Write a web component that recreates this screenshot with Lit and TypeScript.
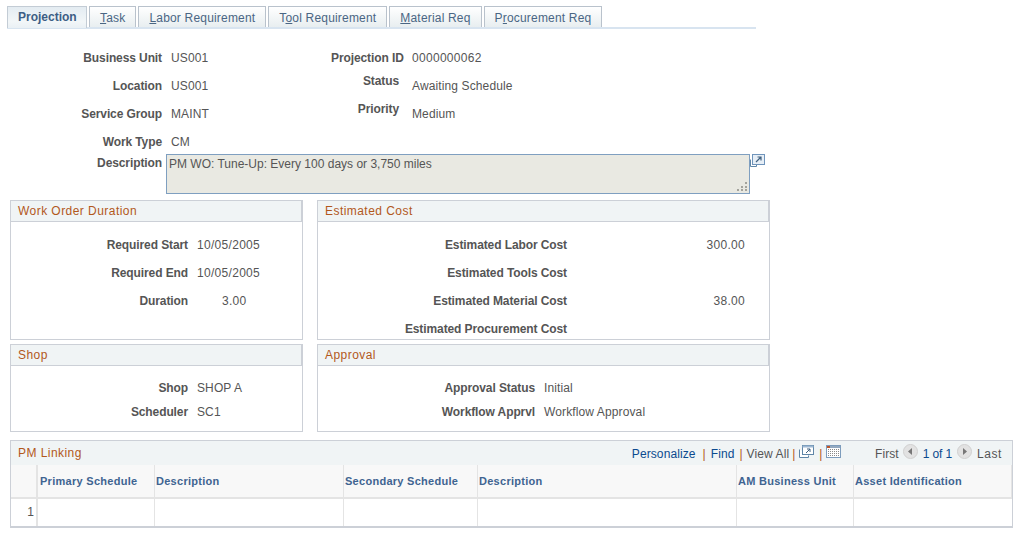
import { LitElement, html, css } from "lit";
import { customElement } from "lit/decorators.js";

const F = (l: string, v: string, cls = "") => html`<div class="lab ${cls}">${l}</div><div class="val ${cls}">${v}</div>`;

@customElement("app-root")
export class AppRoot extends LitElement {
  static styles = css`
    :host { display: block; width: 1021px; height: 536px; background: #fff; font-family: "Liberation Sans", Arial, sans-serif; font-size: 12px; color: #555; overflow: hidden; letter-spacing: .12px; }
    .tabs { display: flex; margin: 6px 0 0 7px; width: 749px; height: 21px; border-bottom: 2px solid #d8e4f0; }
    .tab { height: 21px; box-sizing: border-box; border: 1px solid #b9c2cc; border-bottom: 0; background: linear-gradient(#fff, #e8eef0); color: #4a6684; padding: 4px 10px 0 10px; margin-right: 2px; line-height: 15px; white-space: nowrap; letter-spacing: .185px; }
    .tab u { text-decoration: underline; }
    .tab.on { height: 22px; width: 80px; background: linear-gradient(#e4ecf2, #f2f6f8 70%, #e9f0f5); color: #3d5e85; font-weight: 700; padding: 3px 0 0 10px; letter-spacing: 0; margin-bottom: -1px; border-color: #c3ccd5; }
    .form { display: grid; grid-template-columns: 162px 169px 72px 1fr; grid-auto-rows: 28px; margin-top: 15px; align-items: center; }
    .lab { text-align: right; font-weight: 700; letter-spacing: -.1px; white-space: nowrap; }
    .val { padding-left: 9px; white-space: nowrap; }
    .val.d { letter-spacing: .3px; }
    .lab.up { padding: 0 4px 10px 0; }
    .spacer { grid-column: 3 / 5; }
    .descrow { display: flex; height: 46px; margin-top: -2px; }
    .descrow .lab { width: 162px; padding-top: 2px; line-height: 15px; }
    .ta { width: 584px; height: 40px; box-sizing: border-box; margin-left: 4px; border: 1px solid #7f9fc0; background: #e9e9e2; padding: 2px 2px; line-height: 15px; position: relative; letter-spacing: 0; }
    .grip { position: absolute; right: 1px; bottom: 1px; }
    .groups { display: grid; grid-template-columns: 293px 453px; grid-template-rows: 140px 88px; column-gap: 14px; row-gap: 4px; margin-left: 10px; }
    .grp { border: 1px solid #ccd0d7; box-sizing: border-box; }
    .hd { height: 21px; box-sizing: border-box; background: #f0f4f5; border-bottom: 1px solid #ccd0d7; border-right: 1px solid #ccd0d7; padding: 2px 0 0 7px; line-height: 16px; color: #b2581c; letter-spacing: .45px; }
    .body { display: grid; grid-auto-rows: 28px; align-items: center; padding-top: 9px; }
    .b1 { grid-template-columns: 177px 1fr; }
    .b2 { grid-template-columns: 249px 178px; }
    .b2 .val { text-align: right; padding: 0; }
    .b3 { grid-template-columns: 177px 1fr; grid-auto-rows: 24px; padding-top: 10px; }
    .b4 { grid-template-columns: 217px 1fr; grid-auto-rows: 24px; padding-top: 10px; }
    .val.num { padding-left: 34px; }
    .table { margin: 8px 0 0 10px; width: 1003px; height: 88px; border: 1px solid #ccd0d7; border-bottom-width: 2px; box-sizing: border-box; }
    .thd { height: 24px; background: #f0f4f5; display: flex; align-items: center; }
    .thd .t { margin-left: 7px; color: #b2581c; letter-spacing: .45px; flex: 1; }
    .nav { display: flex; align-items: center; white-space: nowrap; margin-right: 10px; height: 24px; padding-top: 2px; box-sizing: border-box; letter-spacing: .1px; }
    .nav a { color: #0b4a8f; }
    .nav a.pg { letter-spacing: -.15px; }
    .last { letter-spacing: .6px; }
    .s { color: #b2581c; letter-spacing: 0; }
    .s1 { margin: 0 5px 0 7px; }
    .s2 { margin: 0 4px 0 5px; }
    .s3 { margin: 0 4px 0 3px; }
    .s4 { margin: 0 4px 0 5px; }
    .nav svg { display: block; margin-bottom: 5px; }
    .first { margin-left: 33.5px; }
    .prev { margin: 0 5px 0 4px; }
    .next { margin: 0 5px; }
    .grid { display: grid; grid-template-columns: 27px 117px 189px 134px 259px 117px 1fr; grid-template-rows: 34px 27px; }
    .th { background: #f8f8f8; border-right: 1px solid #e4e4e4; border-bottom: 2px solid #e4e4e4; color: #3f6491; font-weight: 700; font-size: 11px; letter-spacing: .28px; padding: 9px 0 0 1px; box-sizing: border-box; white-space: nowrap; line-height: 15px; }
    .th.w { border-right-width: 2px; }
    .th.p { padding-left: 2px; }
    .th:last-child { border-right: 0; }
    .td { border-right: 1px solid #e4e4e4; box-sizing: border-box; }
    .td.n { border-right-width: 2px; text-align: right; padding: 6px 2px 0 0; line-height: 15px; }
    .td:last-child { border-right: 0; }
  `;

  render() {
    const tabs: [string, string, string][] = [["", "T", "ask"], ["", "L", "abor Requirement"], ["T", "o", "ol Requirement"], ["", "M", "aterial Req"], ["P", "r", "ocurement Req"]];
    return html`
      <div class="tabs">
        <div class="tab on">Projection</div>
        ${tabs.map(([a, b, c]) => html`<div class="tab">${a}<u>${b}</u>${c}</div>`)}
      </div>
      <div class="form">
        ${F("Business Unit", "US001")}${F("Projection ID", "0000000062", "d")}
        ${F("Location", "US001")}${F("Status", "Awaiting Schedule", "up")}
        ${F("Service Group", "MAINT")}${F("Priority", "Medium", "up")}
        ${F("Work Type", "CM")}<div class="spacer"></div>
      </div>
      <div class="descrow">
        <div class="lab">Description</div>
        <div class="ta">PM WO: Tune-Up: Every 100 days or 3,750 miles
          <svg class="grip" width="13" height="11" viewBox="0 0 13 11" fill="#a3a39c">
            <rect x="10" y="1" width="2" height="2"/><rect x="6" y="5" width="2" height="2"/><rect x="10" y="5" width="2" height="2"/><rect x="2" y="8" width="2" height="2"/><rect x="6" y="8" width="2" height="2"/><rect x="10" y="8" width="2" height="2"/>
          </svg>
        </div>
        <svg width="15" height="14" viewBox="0 0 15 14">
          <path d="M0.5 5.500v7h6v-2" fill="none" stroke="#5f86a8"/>
          <rect x="2.500" y="0.500" width="12" height="10" fill="#e6eef6" stroke="#6f94bb"/>
          <path d="M6 8l5-5M7.500 3h3.500v3.500" fill="none" stroke="#40607f" stroke-width="1.2"/>
        </svg>
      </div>
      <div class="groups">
        <div class="grp"><div class="hd">Work Order Duration</div>
          <div class="body b1">
            ${F("Required Start", "10/05/2005", "d")}${F("Required End", "10/05/2005", "d")}${F("Duration", "3.00", "num d")}
          </div></div>
        <div class="grp"><div class="hd">Estimated Cost</div>
          <div class="body b2">
            ${F("Estimated Labor Cost", "300.00", "d")}${F("Estimated Tools Cost", "")}${F("Estimated Material Cost", "38.00", "d")}${F("Estimated Procurement Cost", "")}
          </div></div>
        <div class="grp"><div class="hd">Shop</div>
          <div class="body b3">${F("Shop", "SHOP A")}${F("Scheduler", "SC1")}</div></div>
        <div class="grp"><div class="hd">Approval</div>
          <div class="body b4">${F("Approval Status", "Initial")}${F("Workflow Apprvl", "Workflow Approval")}</div></div>
      </div>
      <div class="table">
        <div class="thd">
          <div class="t">PM Linking</div>
          <div class="nav">
            <a>Personalize</a><span class="s s1">|</span><a>Find</a><span class="s s2">|</span><span>View All</span><span class="s s3">|</span>
            <svg width="15" height="14" viewBox="0 0 15 14"><path d="M.5 4.500v8h9v-2" fill="#fff" stroke="#5f86a8"/><rect x="3.500" y=".5" width="11" height="9" fill="#fff" stroke="#5f86a8"/><rect x="3.500" y=".5" width="11" height="2" fill="#9db7d2"/><path d="M7 8l4-4M8 4h3v3" fill="none" stroke="#40607f"/></svg>
            <span class="s s4">|</span>
            <svg width="15" height="13" viewBox="0 0 15 13"><rect x=".5" y=".5" width="14" height="12" fill="#fff" stroke="#7d9cbc"/><rect x="1" y="1" width="3" height="2" fill="#c0562a"/><rect x="4" y="1" width="10" height="2" fill="#93a9c0"/><path d="M2 4.500h11M2 6.500h11M2 8.500h11M2 10.500h11" stroke="#8a8a8a" stroke-dasharray="1 1"/></svg>
            <span class="first">First</span>
            <svg class="prev" width="15" height="15" viewBox="0 0 15 15"><circle cx="7.500" cy="7.500" r="7" fill="#e2e2e2" stroke="#d0d0d0"/><path d="M9 4v7L5 7.500z" fill="#777"/></svg>
            <a class="pg">1 of 1</a>
            <svg class="next" width="15" height="15" viewBox="0 0 15 15"><circle cx="7.500" cy="7.500" r="7" fill="#e2e2e2" stroke="#d0d0d0"/><path d="M6 4v7l4-3.500z" fill="#777"/></svg>
            <span class="last">Last</span>
          </div>
        </div>
        <div class="grid">
          <div class="th w"></div><div class="th p">Primary Schedule</div><div class="th">Description</div><div class="th">Secondary Schedule</div><div class="th">Description</div><div class="th">AM Business Unit</div><div class="th">Asset Identification</div>
          <div class="td n">1</div><div class="td"></div><div class="td"></div><div class="td"></div><div class="td"></div><div class="td"></div><div class="td"></div>
        </div>
      </div>
    `;
  }
}
